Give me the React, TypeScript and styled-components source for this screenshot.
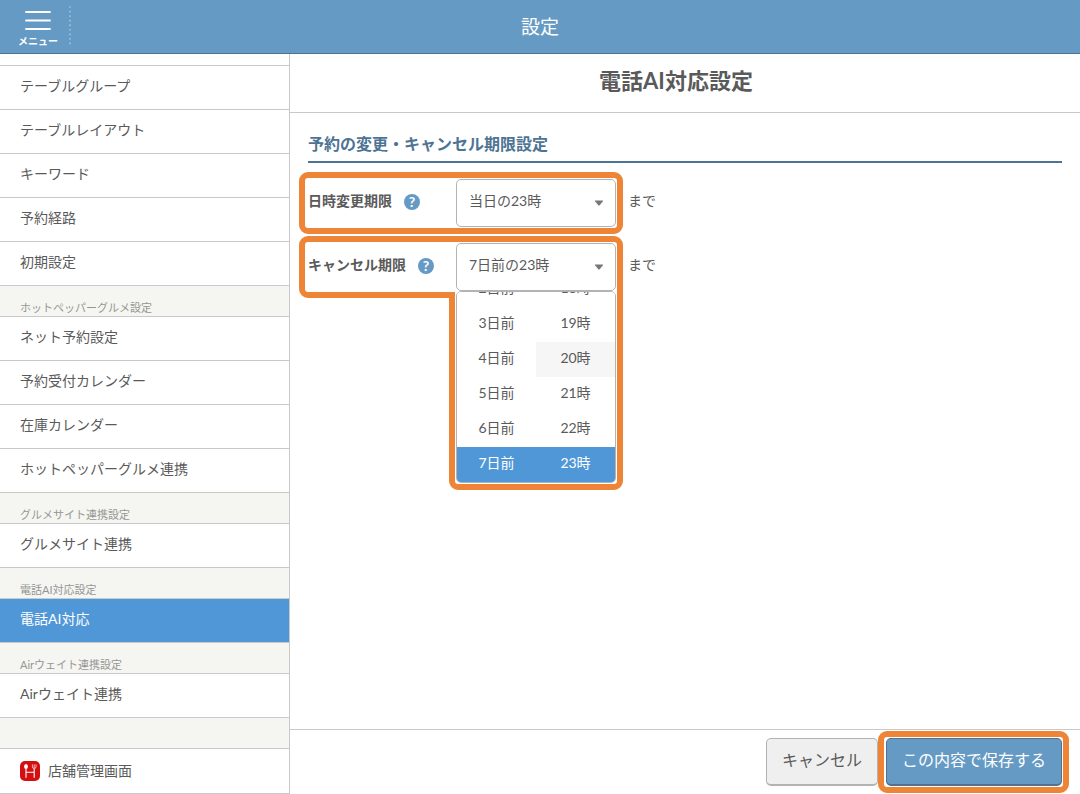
import React, { useState } from "react";
import styled, { createGlobalStyle } from "styled-components";

const color = {
  brand: "#659ac4",
  brandDark: "#4e7494",
  active: "#5097d8",
  line: "#c9c9c9",
  control: "#b3b3b3",
  text: "#5a5a5a",
  muted: "#959595",
  group: "#f5f5f1",
  callout: "#ee8436",
};

const GlobalStyle = createGlobalStyle`
  *, *::before, *::after { box-sizing: border-box; }
  body {
    margin: 0;
    background: #fff;
    color: ${color.text};
    font-family: "Lato", "Noto Sans CJK JP", sans-serif;
    font-size: 14px;
    line-height: 20px;
    font-weight: 400;
  }
  button, select { font: inherit; color: inherit; }
  h1, h2, p, ul { margin: 0; padding: 0; }
`;

const Page = styled.div`
  display: flex;
  flex-direction: column;
  min-height: 100vh;
`;

const Header = styled.header`
  display: grid;
  grid-template-columns: 1fr auto 1fr;
  height: 54px;
  background: ${color.brand};
  border-bottom: 1px solid ${color.brandDark};
  color: #fff;
`;

const HeaderTitle = styled.p`
  font-size: 19px;
  line-height: 54px;
`;

const HeaderStart = styled.div`
  display: flex;
  padding: 6px 0 6px 7px;
`;

const MenuButton = styled.button`
  display: flex;
  flex-direction: column;
  align-items: center;
  gap: 3px;
  width: 62px;
  padding: 4px 0 0;
  border: 0;
  background: none;
  font-size: 10px;
  line-height: 14px;
  font-weight: 700;
  cursor: pointer;
`;

const Body = styled.div`
  display: grid;
  grid-template-columns: 290px 1fr;
  flex: 1;
`;

const Sidebar = styled.nav`
  border-right: 1px solid ${color.line};
`;

const SidebarTop = styled.div`
  height: 12px;
  border-bottom: 1px solid ${color.line};
`;

const GroupLabel = styled.h2`
  height: 31px;
  padding: 14px 20px 0;
  border-bottom: 1px solid ${color.line};
  background: ${color.group};
  color: ${color.muted};
  font-size: 11px;
  line-height: 16px;
  font-weight: 400;
`;

const MenuList = styled.ul`
  list-style: none;
`;

const MenuLink = styled.a<{ $active?: boolean }>`
  display: block;
  height: 44px;
  padding: 10px 20px 0;
  border-bottom: 1px solid ${color.line};
  background: ${(p) => (p.$active ? color.active : "#fff")};
  color: ${(p) => (p.$active ? "#fff" : color.text)};
  text-decoration: none;
`;

const StoreLink = styled.a`
  display: flex;
  align-items: center;
  gap: 8px;
  height: 45px;
  padding-left: 20px;
  border-bottom: 1px solid ${color.line};
  color: ${color.text};
  text-decoration: none;
`;

const Main = styled.main`
  display: flex;
  flex-direction: column;
  min-width: 0;
`;

const Title = styled.h1`
  height: 59px;
  padding-right: 18px;
  border-bottom: 1px solid ${color.line};
  font-size: 22px;
  line-height: 54px;
  font-weight: 700;
  text-align: center;
`;

const Section = styled.section`
  flex: 1;
  padding: 18px 18px 0;
`;

const SectionTitle = styled.h2`
  height: 32px;
  border-bottom: 2px solid ${color.brandDark};
  color: ${color.brandDark};
  font-size: 16px;
  line-height: 26px;
  font-weight: 700;
`;

const Fields = styled.div`
  display: flex;
  flex-direction: column;
  align-items: flex-start;
  gap: 16px;
  padding-top: 16px;
`;

const Field = styled.div`
  position: relative;
  display: flex;
  align-items: center;
  height: 48px;
`;

const LabelCell = styled.div`
  display: flex;
  align-items: center;
  gap: 12px;
  width: 148px;
  padding-bottom: 2px;

  label {
    padding-bottom: 2px;
    font-weight: 700;
  }
`;

const HelpButton = styled.button`
  width: 16px;
  height: 16px;
  padding: 0;
  border: 0;
  border-radius: 50%;
  background: ${color.brand};
  color: #fff;
  font-size: 14px;
  line-height: 16px;
  font-weight: 700;
  cursor: pointer;
`;

const SelectBox = styled.div`
  position: relative;
  width: 160px;

  svg {
    position: absolute;
    top: 21px;
    right: 12px;
    pointer-events: none;
  }
`;

const Select = styled.select`
  display: block;
  width: 100%;
  height: 48px;
  padding: 0 32px 4px 12px;
  border: 1px solid ${color.control};
  border-radius: 5px;
  background: #fff;
  appearance: none;
`;

const Suffix = styled.span`
  padding: 0 0 4px 12px;
`;

const Picker = styled.div`
  position: absolute;
  z-index: 1;
  top: 100%;
  left: 0;
  display: grid;
  grid-template-columns: 1fr 1fr;
  width: 100%;
  height: 192px;
  border: 1px solid ${color.control};
  border-radius: 5px;
  background: #fff;
  overflow: hidden;
`;

const PickerColumn = styled.div`
  display: flex;
  flex-direction: column;
  justify-content: flex-end;
  min-height: 0;
`;

const PickerOption = styled.button<{ $tone?: "hover" | "selected" }>`
  flex: none;
  height: 35px;
  padding: 0 0 4px;
  border: 0;
  background: ${(p) =>
    p.$tone === "selected" ? color.active : p.$tone === "hover" ? "#f6f6f6" : "#fff"};
  color: ${(p) => (p.$tone === "selected" ? "#fff" : color.text)};
  text-align: center;
`;

const Footer = styled.footer`
  display: flex;
  justify-content: flex-end;
  gap: 8px;
  padding: 8px 18px;
  border-top: 1px solid ${color.line};
`;

const Action = styled.button<{ $primary?: boolean }>`
  width: ${(p) => (p.$primary ? "176px" : "112px")};
  height: 48px;
  padding: 0 0 4px;
  border: 1px solid ${(p) => (p.$primary ? "#54708a" : color.control)};
  border-bottom-width: 2px;
  border-radius: 5px;
  background: ${(p) => (p.$primary ? color.brand : "#efefef")};
  color: ${(p) => (p.$primary ? "#fff" : color.text)};
  font-size: 16px;
  cursor: pointer;
`;

const CalloutAnchor = styled.div`
  position: relative;
`;

const Callout = styled.div<{ $inset: string }>`
  position: absolute;
  z-index: 2;
  inset: ${(p) => p.$inset};
  border: 6px solid ${color.callout};
  border-radius: 9px;
  pointer-events: none;
`;

const CalloutShape = styled.svg`
  position: absolute;
  z-index: 2;
  top: -7px;
  left: -9px;
  pointer-events: none;
`;

const HamburgerIcon = () => (
  <svg width="26" height="21" viewBox="0 0 26 21" aria-hidden="true">
    <path d="M1 2h24M1 10.5h24M1 19h24" stroke="#fff" strokeWidth="1.8" strokeLinecap="round" />
  </svg>
);

const DottedDivider = () => (
  <svg width="2" height="40" viewBox="0 0 2 40" aria-hidden="true">
    <path d="M1 1v38" stroke="#a9c8e0" strokeWidth="1.7" strokeLinecap="round" strokeDasharray="0 4.55" />
  </svg>
);

const CaretIcon = () => (
  <svg width="10" height="6" viewBox="0 0 10 6" aria-hidden="true">
    <path d="M1.4.6h7.2q.8 0 .3.7L5.7 5.2q-.7.7-1.4 0L1.1 1.3Q.6.6 1.4.6z" fill="#777" />
  </svg>
);

const StoreIcon = () => (
  <svg width="20" height="20" viewBox="0 0 20 20" aria-hidden="true">
    <rect width="20" height="20" rx="5" fill="#d30f12" />
    <ellipse cx="6" cy="5.6" rx="1.9" ry="2.5" fill="#fff" />
    <path d="M6 7.5v9.2M14.2 8v8.7M6 11.2h8.2" stroke="#fff" strokeWidth="1.1" fill="none" />
    <path d="M12.4 3.4v2.3q0 1.9 1.8 1.9T16 5.7V3.4M14.2 3.4v4" stroke="#fff" strokeWidth=".7" fill="none" />
  </svg>
);

type MenuGroup = { label?: string; items: string[] };

const menu: MenuGroup[] = [
  { items: ["テーブルグループ", "テーブルレイアウト", "キーワード", "予約経路", "初期設定"] },
  {
    label: "ホットペッパーグルメ設定",
    items: ["ネット予約設定", "予約受付カレンダー", "在庫カレンダー", "ホットペッパーグルメ連携"],
  },
  { label: "グルメサイト連携設定", items: ["グルメサイト連携"] },
  { label: "電話AI対応設定", items: ["電話AI対応"] },
  { label: "Airウェイト連携設定", items: ["Airウェイト連携"] },
];

const days = ["2日前", "3日前", "4日前", "5日前", "6日前", "7日前"];
const hours = ["18時", "19時", "20時", "21時", "22時", "23時"];

type DeadlineProps = {
  id: string;
  label: string;
  value: string;
  children?: React.ReactNode;
  callout: React.ReactNode;
};

const Deadline = ({ id, label, value, children, callout }: DeadlineProps) => (
  <Field>
    <LabelCell>
      <label htmlFor={id}>{label}</label>
      <HelpButton type="button" aria-label={`${label}のヘルプ`}>?</HelpButton>
    </LabelCell>
    <SelectBox>
      <Select id={id} defaultValue={value}>
        <option>{value}</option>
      </Select>
      <CaretIcon />
      {children}
    </SelectBox>
    <Suffix>まで</Suffix>
    {callout}
  </Field>
);

export default function App() {
  const [day, setDay] = useState("7日前");
  const [hour, setHour] = useState("23時");

  return (
    <Page>
      <GlobalStyle />
      <Header>
        <HeaderStart>
          <MenuButton type="button">
            <HamburgerIcon />
            メニュー
          </MenuButton>
          <DottedDivider />
        </HeaderStart>
        <HeaderTitle>設定</HeaderTitle>
      </Header>
      <Body>
        <Sidebar>
          <SidebarTop />
          {menu.map((group, i) => (
            <React.Fragment key={i}>
              {group.label && <GroupLabel>{group.label}</GroupLabel>}
              <MenuList>
                {group.items.map((item) => (
                  <li key={item}>
                    <MenuLink href="#" $active={item === "電話AI対応"}>{item}</MenuLink>
                  </li>
                ))}
              </MenuList>
            </React.Fragment>
          ))}
          <GroupLabel as="div" />
          <StoreLink href="#">
            <StoreIcon />
            店舗管理画面
          </StoreLink>
        </Sidebar>
        <Main>
          <Title>電話AI対応設定</Title>
          <Section>
            <SectionTitle>予約の変更・キャンセル期限設定</SectionTitle>
            <Fields>
              <Deadline
                id="change"
                label="日時変更期限"
                value="当日の23時"
                callout={<Callout $inset="-7px 33px -7px -9px" />}
              />
              <Deadline
                key={day + hour}
                id="cancel"
                label="キャンセル期限"
                value={`${day}の${hour}`}
                callout={
                  <CalloutShape width="324" height="254" viewBox="0 0 324 254" aria-hidden="true">
                    <path
                      d="M9 3H315a6 6 0 0 1 6 6V245a6 6 0 0 1-6 6H159a6 6 0 0 1-6-6V59H9a6 6 0 0 1-6-6V9a6 6 0 0 1 6-6z"
                      fill="none"
                      stroke={color.callout}
                      strokeWidth="6"
                    />
                  </CalloutShape>
                }
              >
                <Picker>
                  <PickerColumn role="listbox" aria-label="日">
                    {days.map((d) => (
                      <PickerOption
                        key={d}
                        type="button"
                        role="option"
                        aria-selected={d === day}
                        $tone={d === day ? "selected" : undefined}
                        onClick={() => setDay(d)}
                      >
                        {d}
                      </PickerOption>
                    ))}
                  </PickerColumn>
                  <PickerColumn role="listbox" aria-label="時">
                    {hours.map((h) => (
                      <PickerOption
                        key={h}
                        type="button"
                        role="option"
                        aria-selected={h === hour}
                        $tone={h === hour ? "selected" : h === "20時" ? "hover" : undefined}
                        onClick={() => setHour(h)}
                      >
                        {h}
                      </PickerOption>
                    ))}
                  </PickerColumn>
                </Picker>
              </Deadline>
            </Fields>
          </Section>
          <Footer>
            <Action type="button">キャンセル</Action>
            <CalloutAnchor>
              <Action type="button" $primary>この内容で保存する</Action>
              <Callout $inset="-7px -7px -7px -8px" />
            </CalloutAnchor>
          </Footer>
        </Main>
      </Body>
    </Page>
  );
}
